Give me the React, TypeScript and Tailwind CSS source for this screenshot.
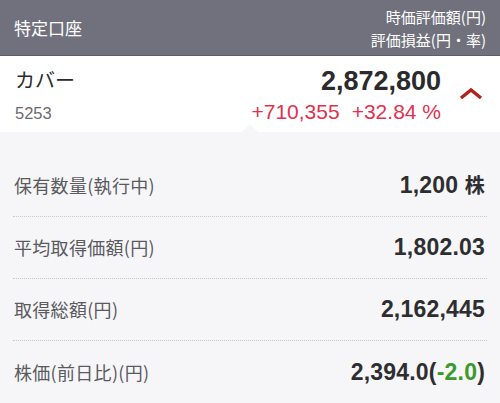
import React from 'react'

const font = { fontFamily: '"Noto Sans CJK JP", "Noto Sans", sans-serif' }
const numFont = { fontFamily: '"Liberation Sans", Arial, "Noto Sans CJK JP", sans-serif' }

function Row({ label, children, last }: { label: string; children: React.ReactNode; last?: boolean }) {
  return (
    <div
      className={`flex items-center justify-between h-[62px] mx-[13px] ${
        last ? '' : 'border-b border-dotted border-[#c9c9cd]'
      }`}
    >
      <span className="text-[18px] text-[#5a5a5f] pl-px tracking-[0.3px]">{label}</span>
      <span className="text-[23px] font-bold text-[#2e2e30] pr-[2px] tracking-[0.2px]" style={numFont}>
        {children}
      </span>
    </div>
  )
}

export default function App() {
  return (
    <div className="w-[500px] h-[403px] overflow-hidden bg-[#f6f6f8]" style={font}>
      {/* Header */}
      <div className="h-[56px] bg-[#70717c] flex items-center justify-between px-[14px] border-b border-[#5d5e68]">
        <span className="text-[17px] text-white">特定口座</span>
        <div className="flex flex-col items-end text-[15px] leading-[23px] text-white">
          <span>時価評価額(円)</span>
          <span>評価損益(円・率)</span>
        </div>
      </div>

      {/* Stock summary */}
      <div className="relative bg-white h-[76px] flex items-center pl-[15px] pr-[17px]">
        <div className="flex-1 flex flex-col">
          <span className="text-[20px] text-[#2b2b2d] leading-[28px]">カバー</span>
          <span className="text-[16.5px] text-[#6b6b70] leading-[20px] mt-[9px]" style={numFont}>5253</span>
        </div>
        <div className="flex flex-col items-end" style={numFont}>
          <span className="text-[27px] font-bold text-[#2b2b2d] leading-[30px] mt-[1px]">2,872,800</span>
          <span className="text-[21px] text-[#e3304f] leading-[24px] mt-[4px]">
            +710,355<span className="ml-[12px]">+32.84 %</span>
          </span>
        </div>
        <svg width="24" height="14" viewBox="0 0 24 14" className="ml-[18px] mt-[-2px]">
          <path d="M2 12 L12 4 L22 12" fill="none" stroke="#b1221b" strokeWidth="3.5" />
        </svg>
        {/* Notch */}
        <div className="absolute left-[242px] bottom-0 w-0 h-0 border-l-[8px] border-r-[8px] border-b-[8px] border-l-transparent border-r-transparent border-b-[#f6f6f8]" />
      </div>

      {/* Details */}
      <div className="pt-[23px]">
        <Row label="保有数量(執行中)">
          1,200 <span style={font} className="text-[20px]">株</span>
        </Row>
        <Row label="平均取得価額(円)">1,802.03</Row>
        <Row label="取得総額(円)">2,162,445</Row>
        <Row label="株価(前日比)(円)" last>
          2,394.0(<span className="text-[#3a9a2a]">-2.0</span>)
        </Row>
      </div>
    </div>
  )
}
